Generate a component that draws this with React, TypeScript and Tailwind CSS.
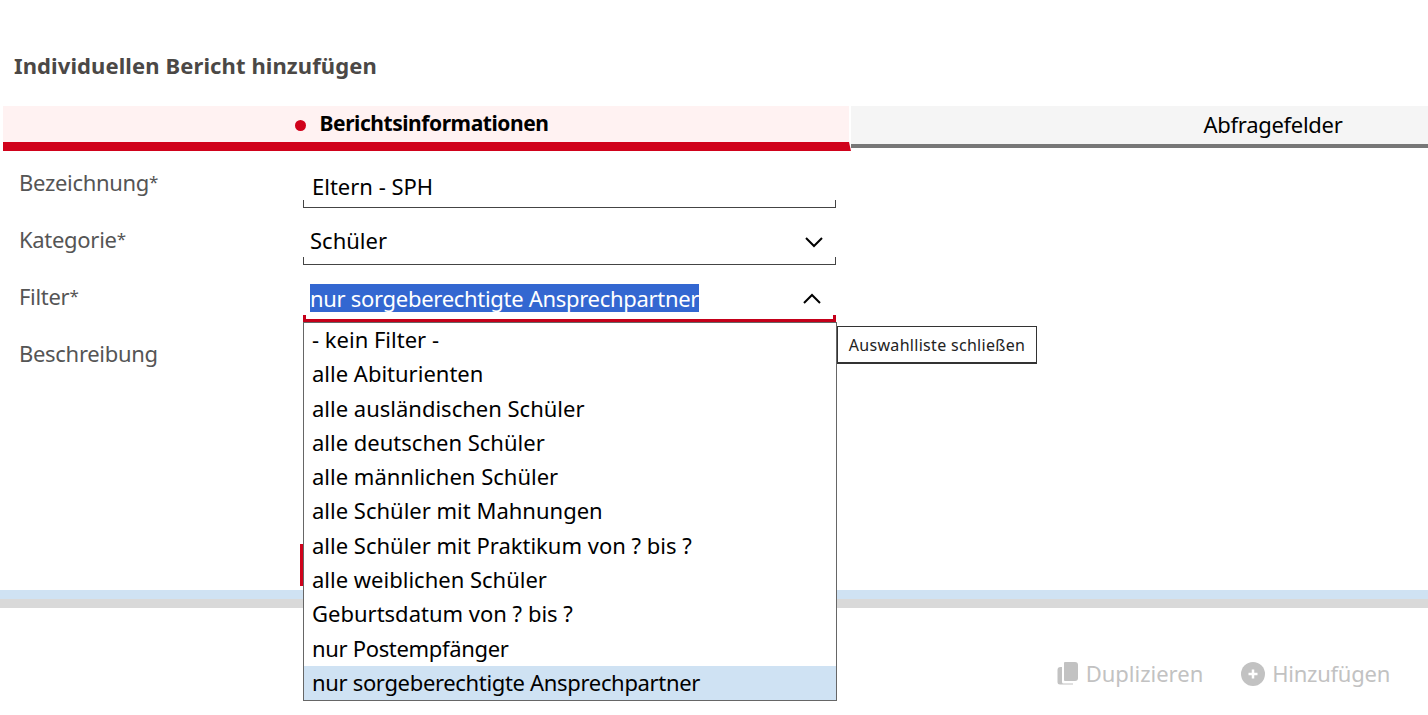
const FILTER_OPTIONS = [
  '- kein Filter -',
  'alle Abiturienten',
  'alle ausländischen Schüler',
  'alle deutschen Schüler',
  'alle männlichen Schüler',
  'alle Schüler mit Mahnungen',
  'alle Schüler mit Praktikum von ? bis ?',
  'alle weiblichen Schüler',
  'Geburtsdatum von ? bis ?',
  'nur Postempfänger',
  'nur sorgeberechtigte Ansprechpartner',
];

function Chevron({ up }: { up?: boolean }) {
  return (
    <svg width="18" height="11" viewBox="0 0 18 11" fill="none" stroke="#000" strokeWidth="2">
      <path d={up ? 'M1 10 L9 2 L17 10' : 'M1 1 L9 9 L17 1'} />
    </svg>
  );
}

function FieldLine() {
  return (
    <div className="h-[8px] border-x border-b border-[#444]" />
  );
}

function Label({ text, required }: { text: string; required?: boolean }) {
  return (
    <div className="w-[284px] pt-[15px] leading-[32px] text-[#555]">
      {text}
      {required && <span className="align-[3px] text-[17px] leading-none">*</span>}
    </div>
  );
}

export default function App() {
  return (
    <div className="flex h-[715px] w-[1428px] flex-col overflow-hidden bg-white font-['Noto_Sans',sans-serif] text-black">
      <h1 className="pl-[14px] pt-[49px] text-[22px] leading-[32px] font-bold tracking-[0.1px] text-[#4b4846]">
        Individuellen Bericht hinzufügen
      </h1>

      {/* Tabs */}
      <div className="mt-[25px] flex h-[45px] overflow-hidden pl-[3px]">
        <div className="flex w-[848px] shrink-0 flex-col">
          <div className="flex h-[36px] w-[846px] items-center justify-center gap-[14px] bg-[#fff2f2] pr-[9px]">
            <span className="mt-[3px] h-[11px] w-[11px] rounded-full bg-[#d0021b]" />
            <span className="text-[21px] font-bold tracking-[-0.45px]">Berichtsinformationen</span>
          </div>
          <div className="h-[9px] bg-[#d0021b] [clip-path:polygon(0_0,846px_0,848px_100%,0_100%)]" />
        </div>
        <div className="flex w-[844px] shrink-0 flex-col">
          <div className="flex h-[38px] items-center justify-center bg-[#f5f5f5] pb-[2px] text-[22px] tracking-[-0.3px]">
            Abfragefelder
          </div>
          <div className="h-[4px] bg-[#777]" />
        </div>
      </div>

      {/* Form */}
      <div className="flex h-[439px] flex-col text-[22px] tracking-[-0.3px]">
        <div className="flex h-[57px] pl-[19px]">
          <Label text="Bezeichnung" required />
          <div className="w-[533px] pt-[21px]">
            <div className="h-[28px] pl-[9px] leading-[28px] tracking-normal">Eltern - SPH</div>
            <FieldLine />
          </div>
        </div>
        <div className="flex h-[57px] pl-[19px]">
          <Label text="Kategorie" required />
          <div className="w-[533px] pt-[20px]">
            <div className="flex h-[29px] items-center justify-between pl-[7px] pr-[13px]">
              <span className="-translate-y-[2px] tracking-normal">Schüler</span>
              <Chevron />
            </div>
            <FieldLine />
          </div>
        </div>
        <div className="flex h-[57px] pl-[19px]">
          <Label text="Filter" required />
          <div className="relative w-[533px] pt-[19px]">
            <div className="flex h-[31px] items-center justify-between pl-[7px] pr-[15px]">
              <span className="-translate-y-[2px] bg-[#3367d1] text-white leading-[28px]">nur sorgeberechtigte Ansprechpartner</span>
              <span className="-mt-[3px] flex">
                <Chevron up />
              </span>
            </div>
            <div className="h-[7px] border-x-[3px] border-b-[3px] border-[#c4001a]" />

            <div className="absolute left-0 top-[57px] z-10 w-[534px] border border-[#666] bg-white tracking-normal">
              {FILTER_OPTIONS.map((opt, i) => (
                <div
                  key={opt}
                  className={`h-[34.3px] pl-[8px] leading-[33px] ${opt.startsWith('nur') ? 'tracking-[-0.33px]' : ''} ${i === FILTER_OPTIONS.length - 1 ? 'bg-[#cfe2f3]' : ''}`}
                >
                  {opt}
                </div>
              ))}
            </div>

            <div className="absolute left-[534px] top-[61px] z-20 flex h-[38px] w-[200px] items-center justify-center border border-[#333] border-b-2 bg-white text-[16px] tracking-[0.3px] text-[#222]">
              Auswahlliste schließen
            </div>
          </div>
        </div>
        <div className="pl-[19px] pt-[15px] leading-[32px] text-[#555]">Beschreibung</div>
        <div className="mb-[4px] ml-[300px] mt-auto h-[42px] w-[3px] bg-[#d0021b]" />
      </div>

      <div className="h-[9px] bg-[#cfe2f3]" />
      <div className="h-[9px] bg-[#d9d9d9]" />

      {/* Actions */}
      <div className="flex flex-1 items-center justify-end gap-[38px] pr-[38px] pt-[24px] text-[22px] text-[#c2c2c2]">
        <div className="flex items-center gap-[7px]">
          <svg width="22" height="24" viewBox="0 0 22 24" fill="#c2c2c2">
            <path d="M8 0h10a3 3 0 0 1 3 3v13a3 3 0 0 1-3 3H8a1 1 0 0 1-1-1V1a1 1 0 0 1 1-1z" />
            <path d="M5 5v15a1.500 1.500 0 0 0 1.500 1.500H16v1H3a2.500 2.500 0 0 1-2.500-2.500V8a3 3 0 0 1 3-3z" />
          </svg>
          <span>Duplizieren</span>
        </div>
        <div className="flex items-center gap-[7px]">
          <svg width="24" height="24" viewBox="0 0 24 24">
            <circle cx="12" cy="12" r="12" fill="#c2c2c2" />
            <path d="M12 7.500v9M7.500 12h9" stroke="#fff" strokeWidth="2.500" />
          </svg>
          <span className="tracking-[-0.25px]">Hinzufügen</span>
        </div>
      </div>
    </div>
  );
}
